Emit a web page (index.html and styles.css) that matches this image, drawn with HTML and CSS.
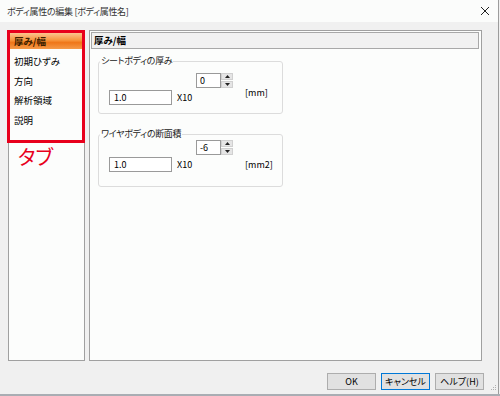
FILE: index.html
```html
<!DOCTYPE html>
<html lang="ja">

<head>
    <meta charset="UTF-8">
    <meta name="viewport" content="width=device-width, initial-scale=1.0">
    <title>ボディ属性の編集</title>
    <link rel="stylesheet" href="styles.css">
</head>

<body>

<div class="dialog">
    <div class="titlebar">
        <span class="title">ボディ属性の編集 [ボディ属性名]</span>
        <svg class="close" width="10" height="10" viewBox="0 0 10 10">
            <path d="M1 1 L9 9 M9 1 L1 9" stroke="#222" stroke-width="1"/>
        </svg>
    </div>

    <div class="content">
        <div class="panes">
            <!-- tab list on the left -->
            <div class="sidebar">
                <ul class="tabs">
                    <li class="tab active">厚み/幅</li>
                    <li class="tab">初期ひずみ</li>
                    <li class="tab">方向</li>
                    <li class="tab">解析領域</li>
                    <li class="tab">説明</li>
                </ul>
                <div class="annot-box"></div>
                <div class="annot-label">タブ</div>
            </div>

            <!-- page for the selected tab -->
            <div class="page">
                <div class="page-header">厚み/幅</div>

                <div class="group group-thick">
                    <div class="group-title">シートボディの厚み</div>
                    <div class="value-grid">
                        <div class="spinner">
                            <div class="spin-text">0</div>
                            <div class="spin-buttons">
                                <div class="spin-btn"><svg width="5" height="3" viewBox="0 0 5 3"><path d="M2.5 0 L5 3 L0 3 Z" fill="#222"/></svg></div>
                                <div class="spin-btn"><svg width="5" height="3" viewBox="0 0 5 3"><path d="M0 0 L5 0 L2.5 3 Z" fill="#222"/></svg></div>
                            </div>
                        </div>
                        <div class="text-box">1.0</div>
                        <div class="times">X10</div>
                        <div class="unit">[mm]</div>
                    </div>
                </div>

                <div class="group group-area">
                    <div class="group-title">ワイヤボディの断面積</div>
                    <div class="value-grid">
                        <div class="spinner">
                            <div class="spin-text">-6</div>
                            <div class="spin-buttons">
                                <div class="spin-btn"><svg width="5" height="3" viewBox="0 0 5 3"><path d="M2.5 0 L5 3 L0 3 Z" fill="#222"/></svg></div>
                                <div class="spin-btn"><svg width="5" height="3" viewBox="0 0 5 3"><path d="M0 0 L5 0 L2.5 3 Z" fill="#222"/></svg></div>
                            </div>
                        </div>
                        <div class="text-box">1.0</div>
                        <div class="times">X10</div>
                        <div class="unit">[mm2]</div>
                    </div>
                </div>
            </div>
        </div>

        <div class="buttons">
            <div class="btn">OK</div>
            <div class="btn default">キャンセル</div>
            <div class="btn">ヘルプ(H)</div>
            <svg class="grip" width="7" height="7" viewBox="0 0 7 7">
                <rect x="5" y="0" width="1" height="1" fill="#b0b0b0"/>
                <rect x="3" y="2" width="1" height="1" fill="#b0b0b0"/>
                <rect x="5" y="2" width="1" height="1" fill="#b0b0b0"/>
                <rect x="1" y="4" width="1" height="1" fill="#b0b0b0"/>
                <rect x="3" y="4" width="1" height="1" fill="#b0b0b0"/>
                <rect x="5" y="4" width="1" height="1" fill="#b0b0b0"/>
            </svg>
        </div>
    </div>
</div>
<div class="taskbar"></div>

</body>

</html>
```

FILE: styles.css
```css
body {
    margin: 0;
    background-color: #f0f0f0;
    font-family: "Noto Sans CJK JP", "Noto Sans", sans-serif;
    font-size: 9px;
    font-feature-settings: "palt";
    color: #000;
}

.dialog {
    width: 498px;
    height: 394px;
    border-right: 1px solid #9c9c9c;
    background-color: #f0f0f0;
}

.titlebar {
    height: 22px;
    background-color: #fbfcfb;
    display: flex;
    align-items: center;
    justify-content: space-between;
    padding: 0 7px;
}

.title {
    color: #333;
    font-size: 9px;
    letter-spacing: -0.3px;
}

.close {
    margin-right: 1px;
}

.content {
    padding: 8px 0 0 8px;
}

.panes {
    display: flex;
    gap: 4px;
    height: 331px;
}

.sidebar {
    position: relative;
    width: 77px;
    background-color: #fcfdfc;
    border: 1px solid #a0a0a0;
    box-sizing: border-box;
    padding: 2px 2px 0 1px;
}

.tabs {
    list-style: none;
    margin: 0;
    padding: 0;
}

.tab {
    height: 19.5px;
    line-height: 19.5px;
    padding-left: 4px;
    white-space: nowrap;
    font-size: 9.5px;
}

.tab.active {
    height: 16px;
    line-height: 16px;
    margin-bottom: 3px;
    font-weight: bold;
    color: #3a2000;
    background: linear-gradient(to bottom, #fbc48f 0%, #f7963d 45%, #ef7618 60%, #f59a48 100%);
}

/* red annotation over the tab list */
.annot-box {
    position: absolute;
    left: -2px;
    top: -1px;
    width: 78px;
    height: 113px;
    border: 3px solid #e8001c;
    box-sizing: border-box;
}

.annot-label {
    position: absolute;
    left: 9px;
    top: 115px;
    font-size: 20px;
    line-height: 22px;
    color: #e8001c;
}

.page {
    width: 393px;
    background-color: #fcfdfc;
    border: 1px solid #a0a0a0;
    box-sizing: border-box;
}

.page-header {
    margin: 1px 2px 0 1px;
    height: 17px;
    line-height: 15px;
    box-sizing: border-box;
    border: 1px solid #a8a8a8;
    background-color: #f1f1f1;
    padding-left: 2px;
    font-weight: bold;
    font-size: 9.5px;
}

.group {
    width: 185px;
    margin-left: 8px;
    border: 1px solid #dcdcdc;
    border-radius: 3px;
    box-sizing: border-box;
    padding-left: 10px;
}

.group-thick {
    margin-top: 12px;
    height: 53px;
}

.group-area {
    margin-top: 20px;
    height: 53px;
}

.group-title {
    width: fit-content;
    margin: -8px 0 0 -9px;
    padding: 0 1px;
    height: 14px;
    line-height: 14px;
    background-color: #fcfdfc;
    color: #222;
    letter-spacing: -0.3px;
}

.value-grid {
    display: grid;
    grid-template-columns: 63px 24px 37px auto;
    grid-template-rows: 15px 15px;
    row-gap: 2px;
}

.group-thick .value-grid {
    margin-top: 5px;
}

.group-area .value-grid {
    margin-top: -1px;
}

.spinner {
    grid-column: 3;
    grid-row: 1;
    display: flex;
}

.spin-text {
    width: 25px;
    border: 1px solid #9a9a9a;
    box-sizing: border-box;
    background-color: #fff;
    padding-left: 3px;
    line-height: 13px;
}

.spin-buttons {
    width: 12px;
    display: flex;
    flex-direction: column;
    gap: 1px;
}

.spin-btn {
    height: 7px;
    display: flex;
    align-items: center;
    justify-content: center;
    background-color: #e5e5e5;
    border: 1px solid #d0d0d0;
    box-sizing: border-box;
}

.text-box {
    grid-column: 1;
    grid-row: 2;
    border: 1px solid #9a9a9a;
    box-sizing: border-box;
    background-color: #fff;
    padding-left: 4px;
    line-height: 13px;
}

.times {
    grid-column: 2;
    grid-row: 2;
    padding-left: 5px;
    line-height: 15px;
}

.unit {
    grid-column: 4;
    padding-left: 12px;
    line-height: 15px;
}

.group-thick .unit {
    grid-row: 1 / 3;
    align-self: center;
    margin-top: 6px;
}

.group-area .unit {
    grid-row: 2;
}

.buttons {
    display: flex;
    justify-content: flex-end;
    align-items: flex-start;
    gap: 5px;
    margin-top: 12px;
    padding-right: 1px;
}

.btn {
    width: 49px;
    height: 17px;
    line-height: 15px;
    box-sizing: border-box;
    border: 1px solid #adadad;
    background-color: #e1e1e1;
    text-align: center;
    white-space: nowrap;
}

.btn.default {
    border-color: #0078d7;
}

.grip {
    margin-top: 12px;
    margin-left: 1px;
}

.taskbar {
    height: 2px;
    background-color: #a9adb3;
}
```
